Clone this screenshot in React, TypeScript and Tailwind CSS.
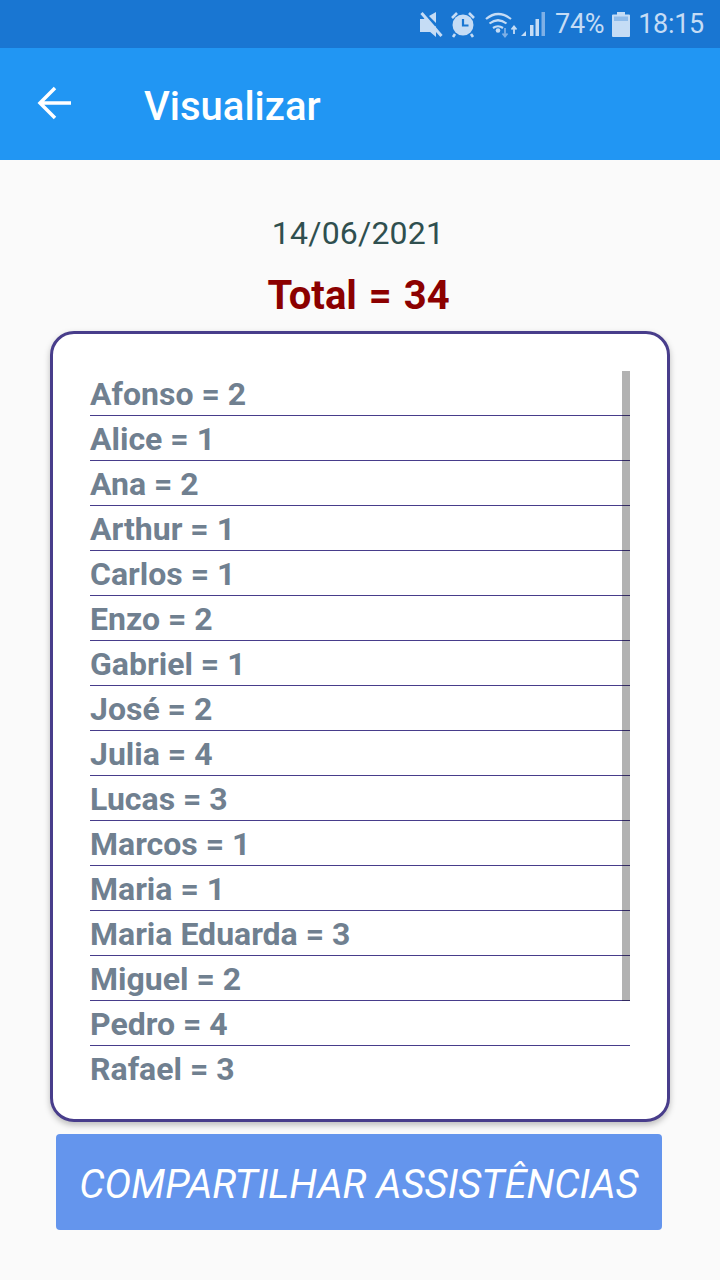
const rows = ["Afonso = 2","Alice = 1","Ana = 2","Arthur = 1","Carlos = 1","Enzo = 2","Gabriel = 1","José = 2","Julia = 4","Lucas = 3","Marcos = 1","Maria = 1","Maria Eduarda = 3","Miguel = 2","Pedro = 4","Rafael = 3"];

function StatusIcons() {
  const c = "#c5dcf5";
  const d = "#7fb0e6";
  return (
    <svg width="126" height="48" viewBox="422 0 126 48" className="shrink-0" fill={c}>
      {/* muted speaker */}
      <path d="M422 19h4l2-2 13 15h-19zM431 16l7-4v11zM438 26v11l-7-6z" />
      <path d="M423.5 13l20 23" stroke={c} strokeWidth="3" fill="none" />
      {/* alarm */}
      <circle cx="465" cy="25" r="10.5" />
      <path d="M465 19v6.5h5.5" stroke="#1976d2" strokeWidth="2.2" fill="none" />
      <path d="M454 18l5-5M476 18l-5-5M457 34l-2 3M473 34l2 3" stroke={c} strokeWidth="2.6" fill="none" />
      {/* wifi */}
      <path d="M488 19q12-10 25 0M491.5 23.5q8.500-6.500 17 0M495 28q5-3.500 10 0" stroke={c} strokeWidth="2.2" fill="none" />
      <circle cx="500" cy="30.500" r="2.300" />
      <path d="M507 28v8M504.500 33.500l2.500 3 2.500-3" stroke={d} strokeWidth="1.800" fill="none" />
      <path d="M516 34v-7M513.500 29.500l2.500-3 2.500 3" stroke={c} strokeWidth="1.800" fill="none" />
      {/* signal */}
      <path d="M523 36l5-5v5z" />
      <path d="M532 36V25h3.500v11z" />
      <path d="M537.500 36V19h3.500v17z" />
      <path d="M543.500 36V12h3.500v24z" fill={d} />
    </svg>
  );
}

function Battery() {
  return (
    <svg width="18" height="25" viewBox="0 0 18 25" className="block">
      <path d="M5 0h8v2.500h4a1 1 0 0 1 1 1V24a1 1 0 0 1-1 1H1a1 1 0 0 1-1-1V3.500a1 1 0 0 1 1-1h4z" fill="#c5dcf5" />
      <path d="M2 4.500h14V9H2z" fill="#8fbbea" />
    </svg>
  );
}

export default function App() {
  return (
    <div className="flex h-[1280px] w-[720px] flex-col overflow-hidden bg-[#fafafa] font-['Roboto',sans-serif]">
      <div className="flex h-[48px] items-center justify-end bg-[#1976d2] pr-[16px] text-[27px] tracking-[-0.3px] text-[#c5dcf5]">
        <StatusIcons />
        <span className="ml-[9px]">74%</span>
        <span className="ml-[8px]"><Battery /></span>
        <span className="ml-[8px]">18:15</span>
      </div>
      <div className="flex h-[112px] items-center bg-[#2196f3] pl-[37px] text-white">
        <svg width="36" height="34" viewBox="0 0 36 34" fill="none" stroke="white" strokeWidth="3.500" className="-mt-[3px] shrink-0">
          <path d="M34 17H4M18 2L3 17l15 15" />
        </svg>
        <span className="ml-[71px] mt-[5px] text-[40px] font-medium">Visualizar</span>
      </div>
      <div className="mt-[50px] pr-[4px] text-center text-[32px] leading-[46px] tracking-[0.2px] text-[#2f4f4f]">14/06/2021</div>
      <div className="mt-[17px] h-[45px] pr-[3px] text-center text-[40px] font-bold leading-[46px] [word-spacing:2px] text-[#8b0000]">Total = 34</div>
      <div className="mx-[50px] mt-[13px] h-[791px] rounded-[24px] border-[3px] border-[#483d8b] bg-white px-[37px] py-[37px] shadow-[0_3px_6px_rgba(0,0,0,0.25)]">
        <div className="relative">
          {rows.map((r, i) => (
            <div key={r} className={"h-[45px] text-[32px] font-bold leading-[47px] text-[#708090] " + (i < rows.length - 1 ? "border-b border-[#483d8b]" : "")}>{r}</div>
          ))}
          <div className="absolute right-0 top-0 h-[630px] w-[8px] bg-black/30" />
        </div>
      </div>
      <div className="ml-[56px] mt-[12px] flex h-[96px] w-[606px] items-center justify-center rounded-[4px] bg-[#6495ed] pt-[5px] text-[40px] italic text-white">COMPARTILHAR ASSISTÊNCIAS</div>
    </div>
  );
}
